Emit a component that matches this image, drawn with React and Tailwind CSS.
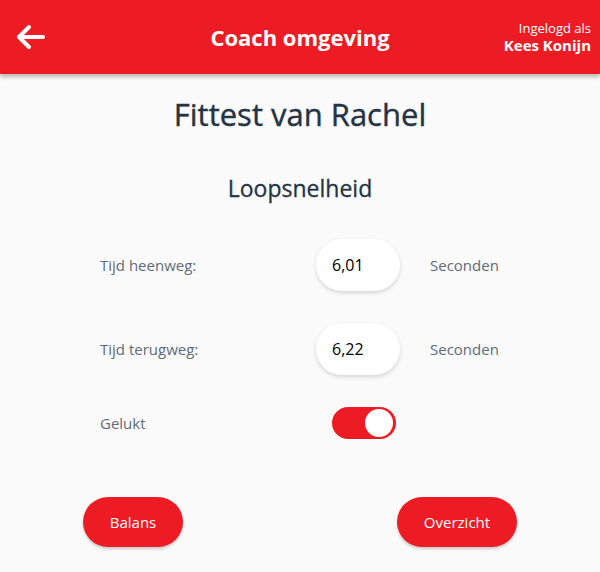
import React, { useState } from "react";

const font = { fontFamily: '"Open Sans", "Noto Sans", sans-serif' };

const Row = ({ label, value }) => (
  <div className="flex items-center h-[52px]">
    <span className="w-[216px] text-[15px] text-[#5f6b78]">{label}</span>
    <div className="w-[84px] h-[52px] rounded-full bg-white shadow-[0_2px_4px_rgba(0,0,0,0.15)] flex items-center pl-4 text-[16px] text-black">
      {value}
    </div>
    <span className="ml-[30px] text-[15px] text-[#5f6b78]">Seconden</span>
  </div>
);

export default function App() {
  const [on, setOn] = useState(true);

  return (
    <div className="w-[600px] h-[572px] bg-[#fafafa] flex flex-col" style={font}>
      {/* header */}
      <header className="h-[74px] bg-[#ed1c24] flex items-center justify-between pl-4 pr-[9px] shadow-[0_3px_4px_rgba(0,0,0,0.25)] relative z-10">
        <svg width="30" height="26" viewBox="0 0 30 26" fill="none" stroke="white" strokeWidth="4" strokeLinecap="round" strokeLinejoin="round">
          <path d="M13 3L3 13l10 10M3 13h24" />
        </svg>
        <h1 className="absolute left-0 right-0 text-center text-[22px] font-bold text-white pointer-events-none">
          Coach omgeving
        </h1>
        <div className="text-right text-white leading-tight">
          <div className="text-[13px]">Ingelogd als</div>
          <div className="text-[15px] font-bold">Kees Konijn</div>
        </div>
      </header>

      {/* title */}
      <h2 className="mt-[17px] text-center text-[31px] text-[#253444] [-webkit-text-stroke:0.4px_#253444]">Fittest van Rachel</h2>
      <h3 className="mt-[33px] text-center text-[23px] text-[#253444] [-webkit-text-stroke:0.3px_#253444]">Loopsnelheid</h3>

      {/* fields */}
      <div className="mt-[34px] pl-[100px] flex flex-col">
        <Row label="Tijd heenweg:" value="6,01" />
        <div className="h-[32px]" />
        <Row label="Tijd terugweg:" value="6,22" />
        <div className="h-[32px]" />
        <div className="flex items-center h-[32px]">
          <span className="w-[232px] text-[15px] text-[#5f6b78]">Gelukt</span>
          <button
            onClick={() => setOn(!on)}
            className={`w-[64px] h-[32px] rounded-full border-2 border-[#ed1c24] flex items-center px-[1px] ${on ? "bg-[#ed1c24] justify-end" : "bg-white justify-start"}`}
          >
            <span className={`w-[28px] h-[28px] rounded-full ${on ? "bg-white" : "bg-[#ed1c24]"}`} />
          </button>
        </div>
      </div>

      {/* buttons */}
      <div className="mt-[58px] flex justify-between pl-[83px] pr-[83px]">
        <button className="w-[100px] h-[50px] rounded-full bg-[#ed1c24] text-white text-[15px] shadow-[0_2px_3px_rgba(0,0,0,0.2)]">
          Balans
        </button>
        <button className="w-[120px] h-[50px] rounded-full bg-[#ed1c24] text-white text-[15px] shadow-[0_2px_3px_rgba(0,0,0,0.2)]">
          Overzicht
        </button>
      </div>
    </div>
  );
}
